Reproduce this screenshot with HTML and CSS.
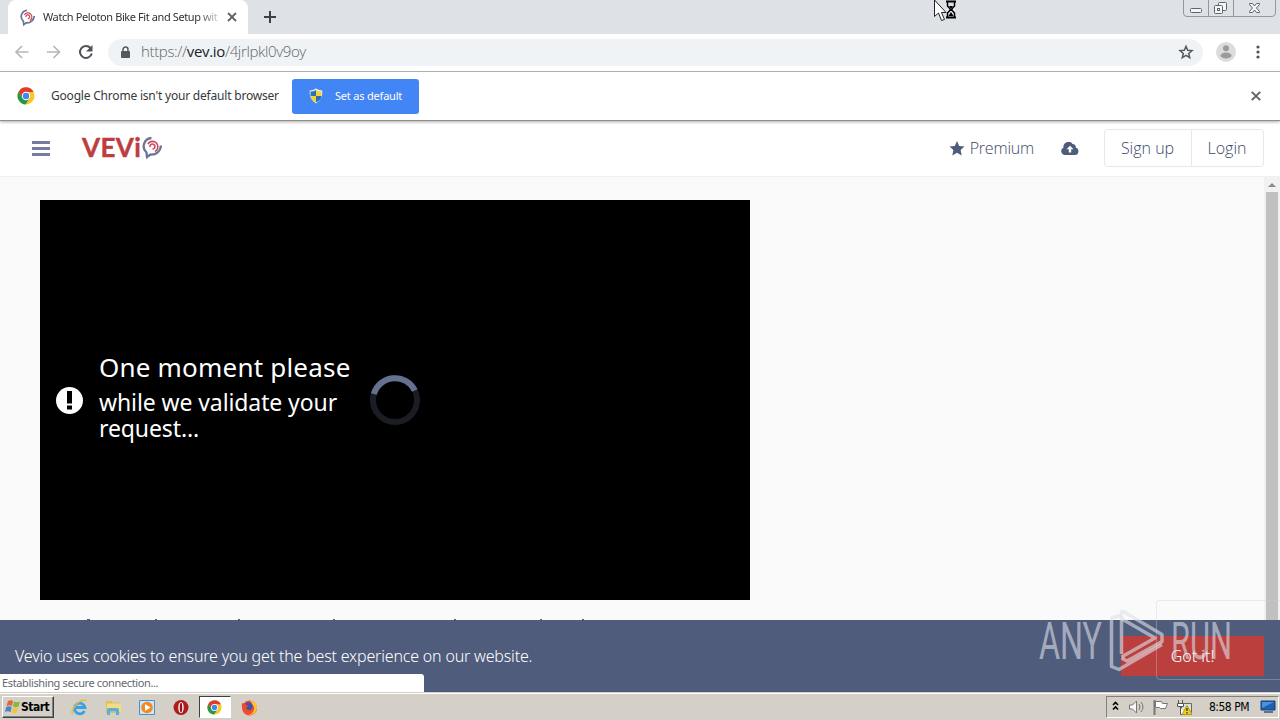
FILE: index.html
```html
<!DOCTYPE html>
<html lang="en">
<head>
  <meta charset="utf-8">
  <title>Vevio</title>
  <link rel="stylesheet" href="styles.css">
</head>
<body>

<svg width="0" height="0" class="defs">
  <symbol id="chrome" viewBox="0 0 18 18">
    <circle cx="9" cy="9" r="8.5" fill="#f8c726"/>
    <path d="M1.6 4.7A8.5 8.5 0 0 1 16.6 5H9L5.5 11Z" fill="#df3b2e"/>
    <path d="M1.6 4.8A8.5 8.5 0 0 0 8.6 17.5L12.5 11 9 13 5.5 11Z" fill="#24994d"/>
    <circle cx="9" cy="9" r="4.2" fill="#fff"/>
    <circle cx="9" cy="9" r="3.2" fill="#4285f4"/>
  </symbol>
  <symbol id="swirl" viewBox="0 0 20 22">
    <path d="M9.500 1.500A8.300 8.300 0 0 0 4.500 16L5 20.500 8.500 18A9.500 9.500 0 0 0 19 9" fill="none" stroke="#6b7596" stroke-width="2.300"/>
    <path d="M5.800 7.500A5.400 5.400 0 1 1 13 15M8 10.500A2.500 2.500 0 1 1 10.500 12.500" fill="none" stroke="#c8485a" stroke-width="1.600"/>
  </symbol>
</svg>

<div class="tab-strip">
  <div class="tab">
    <svg class="favicon" width="15" height="17"><use href="#swirl"/></svg>
    <span class="tab-title">Watch Peloton Bike Fit and Setup wit</span>
    <svg width="10" height="10" viewBox="0 0 10 10"><path d="M1 1l8 8M9 1L1 9" stroke="#5f6368" stroke-width="1.800"/></svg>
  </div>
  <svg class="new-tab" width="12" height="12" viewBox="0 0 12 12"><path d="M6 0v12M0 6h12" stroke="#3c4043" stroke-width="2"/></svg>
  <svg class="window-buttons" width="94" height="18" viewBox="0 0 94 18">
    <path d="M.5 0V13Q.5 16.500 4 16.500H89Q92.500 16.500 92.500 13V0M25.500 0v16M50.500 0v16" fill="none" stroke="#92989f"/>
    <g fill="#f4f6f8" stroke="#60656c">
      <rect x="7.500" y="8.500" width="11" height="4" rx="1"/>
      <rect x="35.500" y="2.500" width="8" height="8" rx="1"/>
      <rect x="31.500" y="5.500" width="8" height="8" rx="1"/>
      <rect x="34.500" y="8.500" width="2" height="2"/>
      <path d="M66.500 3.500h3l2 2.500 2-2.500h3v1L73.500 8l3 3.500v1h-3l-2-2.500-2 2.500h-3v-1l3-3.500-3-3.500z"/>
    </g>
  </svg>
  <svg class="cursor" width="24" height="22" viewBox="0 0 24 22">
    <path d="M.5 0V16.500L4.500 13l3 7.500 3-1-3-7H12z" fill="#fff" stroke="#222"/>
    <path d="M12 1.500h10M12 17.500h10" stroke="#000" stroke-width="2"/>
    <path d="M13.500 2v4l3 3.500-3 3.500v4M20.500 2v4l-3 3.500 3 3.500v4" fill="#fff" stroke="#000" stroke-width="1.500"/>
    <path d="M15 6h4l-2 3zM14.500 16l2.500-4 2.500 4z"/>
  </svg>
</div>

<div class="toolbar">
  <svg class="nav-icons" width="80" height="16" viewBox="0 0 80 16">
    <path d="M14.500 8H2M8 2L2 8l6 6M33 8h12.500M39.500 2l6 6-6 6" fill="none" stroke="#b5b7ba" stroke-width="1.700"/>
    <path d="M76.500 4A6 6 0 1 0 77.800 9.500" fill="none" stroke="#4f5357" stroke-width="2"/>
    <path d="M78.500 1v6.500H72z" fill="#4f5357"/>
  </svg>
  <div class="omnibox">
    <svg class="lock" width="10" height="13" viewBox="0 0 10 13"><rect x="0" y="5" width="9" height="7" rx="1" fill="#55595d"/><path d="M2 6V3.500a2.500 2.500 0 0 1 5 0V6" fill="none" stroke="#55595d" stroke-width="1.500"/></svg>
    <span class="url">https://<b>vev.io</b>/4jrlpkl0v9oy</span>
    <svg class="bookmark" width="16" height="16" viewBox="0 0 16 16"><path d="M8 2.300l1.700 3.900 4.300.4-3.300 2.800 1 4.200L8 11.400l-3.700 2.200 1-4.200L2 6.600l4.300-.4z" fill="none" stroke="#55595d" stroke-width="1.500"/></svg>
  </div>
  <svg class="avatar" width="20" height="20" viewBox="0 0 20 20"><circle cx="10" cy="10" r="10" fill="#dcdcdc"/><circle cx="10" cy="6.300" r="3" fill="#9b9b9b"/><ellipse cx="10" cy="13.500" rx="5.500" ry="3" fill="#9b9b9b"/></svg>
  <svg class="menu-dots" width="4" height="14" viewBox="0 0 4 14" fill="#4f5357"><circle cx="2" cy="2" r="1.600"/><circle cx="2" cy="7" r="1.600"/><circle cx="2" cy="12" r="1.600"/></svg>
</div>

<div class="infobar">
  <svg class="infobar-logo" width="18" height="18"><use href="#chrome"/></svg>
  <span class="infobar-text">Google Chrome isn't your default browser</span>
  <div class="default-button">
    <svg width="14" height="16" viewBox="0 0 14 16">
      <path d="M7 .5Q10 2.500 13.300 2.500 14 11 7 15.500 0 11 .7 2.500 4 2.500 7 .5z" fill="#e9eef0"/>
      <path d="M7 2v6H1.500L1.600 3.500Q5 3.500 7 2zM7 8h5.500Q12 12 7 14.500z" fill="#2e70b5"/>
      <path d="M7 2v6h5.500l-.1-4.500Q9 3.500 7 2zM7 8H1.500Q2 12 7 14.500z" fill="#f5d13a"/>
    </svg>
    <span>Set as default</span>
  </div>
  <svg class="infobar-close" width="10" height="10" viewBox="0 0 10 10"><path d="M.8.8l8.400 8.400M9.200.8L.8 9.200" stroke="#5f6368" stroke-width="1.900"/></svg>
</div>

<header class="site-header">
  <div class="burger"><i></i><i></i><i></i></div>
  <div class="logo"><span>VEVi</span><svg width="20" height="23"><use href="#swirl"/></svg></div>
  <div class="premium">
    <svg width="16" height="15" viewBox="0 0 16 15"><path d="M8 0l2.200 4.900 5.300.6-3.900 3.600 1.100 5.400L8 11.800l-4.700 2.700 1.100-5.400L.5 5.500l5.300-.6z" fill="#4f5b7c"/></svg>
    <span>Premium</span>
  </div>
  <svg class="upload" width="18" height="13" viewBox="0 0 18 13"><path d="M4 13a4 4 0 0 1-1.500-7.600A5 5 0 0 1 11.600 2a3.200 3.200 0 0 1 3.200 3.600A3.800 3.800 0 0 1 14 13z" fill="#4f5b7c"/><path d="M9 3.700l3.500 3.600h-2.300V10.500H7.800V7.300H5.500z" fill="#fff"/></svg>
  <div class="account">
    <span class="sign-up">Sign up</span>
    <span class="login">Login</span>
  </div>
</header>

<main class="content">
  <div class="page">
    <div class="player">
      <svg class="alert" width="28" height="28" viewBox="0 0 28 28"><circle cx="13.500" cy="14.500" r="13.500" fill="#fff"/><path d="M11 5h5v12.500h-5zM11 19.500h5v4h-5z" fill="#000"/></svg>
      <div class="message">
        <div class="message-title">One moment please</div>
        <div class="message-line">while we validate your</div>
        <div class="message-line">request...</div>
      </div>
      <svg class="spinner" width="50" height="50" viewBox="0 0 50 50" fill="none" stroke-width="6"><circle cx="25" cy="25" r="22" stroke="#1b1d25"/><path d="M3.900 19A22 22 0 0 1 44.800 15.500" stroke="#65728f"/></svg>
    </div>
    <svg class="title-tops" width="710" height="20" viewBox="0 0 710 20" fill="#4f5b7c"><path d="M47 19h3v1h-3zM115 19h2v1h-2zM198 19h2v1h-2zM293 19h2v1h-2zM414 19h2v1h-2zM500 19h2v1h-2zM542 19h2v1h-2z"/></svg>
  </div>
  <div class="scrollbar"><i class="arrow-up"></i><div class="thumb"></div></div>
</main>

<div class="cookie-bar">
  <span class="cookie-text">Vevio uses cookies to ensure you get the best experience on our website.</span>
  <div class="got-it">Got it!</div>
  <div class="status">Establishing secure connection...</div>
</div>

<svg class="watermark" width="260" height="92" viewBox="0 0 260 92">
  <path d="M260 .5H139Q136.500.5 136.500 3V76Q136.500 79.500 140 79.500H260" fill="none" stroke="#ccc" stroke-opacity=".35"/>
  <g class="watermark-text">
    <text x="19" y="59" textLength="63" lengthAdjust="spacingAndGlyphs">ANY</text>
    <text x="151" y="59" textLength="61" lengthAdjust="spacingAndGlyphs">RUN</text>
  </g>
  <g fill="none" stroke="#dfe1e8" stroke-opacity=".6" stroke-width="3.500" stroke-linejoin="round">
    <path d="M101 15.500L93 17.500Q91.500 18 91.500 20V66.500L99 69.500 142 44.500"/>
    <path d="M101.500 54V12Q103 11 105 12.500L142 34.500V41.500L107 61 101.500 58"/>
    <path d="M102 19L135 38 101.500 57"/>
  </g>
</svg>

<footer class="taskbar">
  <div class="start">
    <svg width="16" height="16" viewBox="0 0 16 16"><path d="M3 2q3-1.500 5 0L7 7Q5 5.500 1.500 7z" fill="#e8652e"/><path d="M9 2.500q3 1.500 6 0L13.500 7.500q-3 1.500-5.500 0z" fill="#83b843"/><path d="M1.200 8q3-1.500 5.500 0l-1.200 5q-3-1.500-5.500 0z" fill="#4385d0"/><path d="M7.700 8.500q3 1.500 5.700 0l-1.500 5q-3 1.500-5.500 0z" fill="#f6c338"/></svg>
    <span>Start</span>
  </div>
  <div class="launchers">
    <div class="launcher"><svg width="17" height="17" viewBox="0 0 17 17"><path d="M13.500 12A5.300 5.300 0 1 1 14 8.500H4" fill="none" stroke="#36a3e4" stroke-width="2.800"/><path d="M2 15Q-1 13 5 6T15.500 2" fill="none" stroke="#e8b938" stroke-width="1.300"/></svg></div>
    <div class="launcher"><svg width="17" height="17" viewBox="0 0 17 17"><path d="M1 2h6l1 1.500h7V14H1z" fill="#e0bf57"/><path d="M2 4.500h14V13H2z" fill="#f3dc85"/><path d="M2 16v-5q0-2 2-2h8q2 0 2 2v5h-3v-3.500H5V16z" fill="#5caed6"/></svg></div>
    <div class="launcher"><svg width="17" height="17" viewBox="0 0 17 17"><path d="M.5 1.500h15v14H.5z" fill="#cfe5f8" stroke="#4f91c6"/><circle cx="8" cy="8.500" r="5.800" fill="#f08a20"/><path d="M6 5l5.500 3.500L6 12z" fill="#fff"/></svg></div>
    <div class="launcher"><svg width="17" height="17" viewBox="0 0 17 17"><circle cx="8" cy="8.500" r="7.500" fill="#ae1c20"/><ellipse cx="8" cy="8.500" rx="2.700" ry="5.500" fill="#fff"/><ellipse cx="8" cy="8.500" rx="1.300" ry="4.700" fill="#951518"/></svg></div>
    <div class="launcher active"><svg width="15" height="15"><use href="#chrome"/></svg></div>
    <div class="launcher"><svg width="17" height="17" viewBox="0 0 17 17"><circle cx="8.500" cy="9" r="7.500" fill="#f0512c"/><path d="M9 1q7 2 7 8-1 7-8 7 6-3 5-8-2-3-4-7z" fill="#ffc331"/><circle cx="7.500" cy="7.500" r="4.200" fill="#4650a5"/><path d="M1 4l3 1 3 2-2 2q2 3 6 2-3 4-7 2Q0 10 1 4z" fill="#ed4a2c"/></svg></div>
  </div>
  <div class="tray">
    <svg class="tray-icons" width="80" height="18" viewBox="0 0 80 18">
      <path d="M1 7l2.500-2.500L6 7M1 11.500L3.500 9 6 11.500" fill="none" stroke="#000" stroke-width="1.600"/>
      <path d="M17.500 7h3l4-4v12l-4-4h-3z" fill="#f8f8f8" stroke="#777"/>
      <path d="M27 6q2 3 0 6M29 4q4 5 0 10" fill="none" stroke="#777"/>
      <path d="M42.500 2v15" stroke="#777" stroke-width="2"/>
      <path d="M43.500 3.500h6l1 2h5l-2 5h-5l-1-1h-4z" fill="#fff" stroke="#777"/>
      <path d="M69.500 5.500h10v9h-10z" fill="#ddd" stroke="#666"/>
      <path d="M66.500 2v3M70.500 2v3M65.500 5.500h6v3h-6zM68.500 9v7.500h5" fill="#fff" stroke="#555"/>
      <path d="M75 7.500l5 9H70z" fill="#f2d31b" stroke="#b69b0c"/><path d="M75 10v3M75 14v1.500" stroke="#000"/>
    </svg>
    <span class="clock">8:58 PM</span>
    <svg width="16" height="14" viewBox="0 0 16 14"><path d="M1 1h14v9H1z" fill="#1c60b4" stroke="#164174"/><path d="M2 2h12L2 8z" fill="#4c91db"/><path d="M4 12h9" stroke="#5d7690" stroke-width="2"/></svg>
  </div>
</footer>

</body>
</html>
```

FILE: styles.css
```css
* {
  box-sizing: border-box;
}

body {
  margin: 0;
  width: 1280px;
  height: 720px;
  overflow: hidden;
  background: #fff;
  font-family: "Noto Sans", sans-serif;
  display: flex;
  flex-direction: column;
  position: relative;
}

span, .got-it, .status, .message {
  white-space: nowrap;
}

svg {
  display: block;
  flex: none;
}

.defs {
  position: absolute;
}

/* browser window */
.tab-strip {
  height: 34px;
  flex: none;
  background: #dee1e6;
  display: flex;
  align-items: center;
  position: relative;
}

.tab {
  width: 240px;
  height: 34px;
  margin-left: 8px;
  padding-left: 12px;
  background: #fff;
  border-radius: 8px 8px 0 0;
  display: flex;
  align-items: center;
}

.tab-title {
  width: 175px;
  margin: 0 9px 2px 8px;
  font-size: 11px;
  letter-spacing: -0.4px;
  color: #303236;
  -webkit-mask-image: linear-gradient(90deg, #000 155px, transparent 180px);
}

.new-tab {
  margin-left: 16px;
}

.window-buttons {
  margin-left: auto;
  margin-right: 3px;
  align-self: flex-start;
}

.cursor {
  position: absolute;
  left: 934px;
  top: 0;
}

.toolbar {
  height: 38px;
  flex: none;
  padding: 0 20px 1px 14px;
  border-bottom: 1px solid #aeb1b1;
  display: flex;
  align-items: center;
}

.omnibox {
  width: 1095px;
  height: 27px;
  margin-left: 14px;
  padding: 0 9px 0 13px;
  border-radius: 14px;
  background: #f0f3f6;
  display: flex;
  align-items: center;
}

.url {
  margin-left: 10px;
  padding-bottom: 2px;
  font-family: "Open Sans", sans-serif;
  font-weight: 300;
  font-size: 15px;
  letter-spacing: -0.35px;
  color: #5f6368;
}

.url b {
  color: #202124;
  font-weight: 400;
}

.bookmark {
  margin-left: auto;
}

.avatar {
  margin-left: 13px;
}

.menu-dots {
  margin-left: 20px;
}

.infobar {
  height: 49px;
  flex: none;
  margin-bottom: 1px;
  border-bottom: 1px solid #8e8e8e;
  box-shadow: 0 1px 3px #aaa;
  padding: 0 19px 0 17px;
  display: flex;
  align-items: center;
  position: relative;
}

.infobar-text {
  width: 241px;
  margin-left: 16px;
  padding-bottom: 1px;
  font-size: 12px;
  letter-spacing: -0.2px;
  color: #36393d;
}

.default-button {
  width: 127px;
  height: 35px;
  padding-left: 17px;
  border-radius: 3px;
  background: #4285f4;
  color: #fff;
  font-size: 11px;
  letter-spacing: -0.2px;
  display: flex;
  align-items: center;
  gap: 12px;
}

.default-button span {
  padding-bottom: 2px;
}

.infobar-close {
  margin-left: auto;
}

/* site header */
.site-header {
  height: 55px;
  flex: none;
  padding: 0 16px 2px 32px;
  border-bottom: 1px solid #f0f0f0;
  display: flex;
  align-items: center;
  font-family: "Open Sans", sans-serif;
  font-weight: 300;
  font-size: 16px;
  color: #3c4867;
}

.burger {
  width: 18px;
  display: grid;
  gap: 3px;
}

.burger i {
  height: 3px;
  background: #747ca0;
}

.logo {
  width: 81px;
  margin-left: 32px;
  padding-bottom: 2px;
  display: flex;
  align-items: center;
}

.logo span {
  width: 60px;
  font-family: Lato, sans-serif;
  font-size: 26px;
  font-weight: 700;
  line-height: 30px;
  letter-spacing: 0.4px;
  -webkit-text-stroke: 0.4px #bd3d41;
  color: #bd3d41;
}

.premium {
  margin-left: auto;
  display: flex;
  align-items: center;
  gap: 5px;
  letter-spacing: -0.2px;
}

.upload {
  margin: 0 25px 0 27px;
}

.account {
  width: 160px;
  height: 38px;
  border: 1px solid #e7e8ea;
  border-radius: 4px;
  display: flex;
}

.account span {
  padding-right: 1px;
  line-height: 36px;
  text-align: center;
}

.sign-up {
  width: 87px;
  border-right: 1px solid #e7e8ea;
}

.login {
  flex: 1;
}

/* page */
.content {
  height: 443px;
  flex: none;
  background: #fafafa;
  display: flex;
  justify-content: space-between;
}

.page {
  padding: 23px 0 0 40px;
}

.player {
  width: 710px;
  height: 400px;
  padding-left: 16px;
  background: #000;
  display: flex;
  align-items: center;
}

.message {
  width: 271px;
  margin-left: 15px;
  padding-bottom: 10px;
  color: #fff;
}

.message-title {
  margin-bottom: 4px;
  font-size: 26px;
  line-height: 36px;
  letter-spacing: 0.2px;
}

.message-line {
  font-size: 23px;
  line-height: 26px;
  letter-spacing: -0.1px;
}

.scrollbar {
  width: 16px;
  padding: 6px 2px 0;
  background: #f1f1f1;
  display: flex;
  flex-direction: column;
  align-items: center;
}

.arrow-up {
  border: 4px solid transparent;
  border-top: 0;
  border-bottom: 4px solid #8b8b8b;
}

.thumb {
  width: 12px;
  flex: 1;
  margin-top: 5px;
  background: #c1c1c1;
}

.cookie-bar {
  height: 72px;
  flex: none;
  padding: 0 16px 0 15px;
  background: #505c7c;
  color: #fff;
  font-size: 16px;
  font-weight: 300;
  display: flex;
  align-items: center;
  justify-content: space-between;
  position: relative;
}

.cookie-text {
  letter-spacing: -0.18px;
}

.got-it {
  width: 143px;
  height: 40px;
  line-height: 40px;
  text-align: center;
  background: #ba3f3d;
}

.status {
  position: absolute;
  left: 0;
  bottom: 0;
  width: 424px;
  height: 18px;
  padding-left: 2px;
  line-height: 18px;
  border-radius: 0 3px 0 0;
  background: #fff;
  color: #65686c;
  font-size: 11px;
  font-weight: 400;
  letter-spacing: -0.37px;
}

.watermark {
  position: absolute;
  left: 1020px;
  top: 600px;
}

.watermark-text {
  font-family: Roboto, sans-serif;
  font-size: 52px;
  font-weight: 400;
  fill: #dfe1e8;
  fill-opacity: .6;
}

/* taskbar */
.taskbar {
  height: 28px;
  flex: none;
  padding: 1px 1px 0 2px;
  border-top: 1px solid #d4d0c8;
  box-shadow: inset 0 1px #fff;
  background: #d4d0c8;
  font-family: "DejaVu Sans Condensed", "DejaVu Sans", sans-serif;
  font-stretch: condensed;
  display: flex;
  align-items: center;
}

.start {
  width: 52px;
  height: 22px;
  padding-left: 2px;
  border: 1px solid #fff;
  border-right-color: #404040;
  border-bottom-color: #404040;
  box-shadow: inset -1px -1px #808080;
  display: flex;
  align-items: center;
  font-size: 12px;
  font-weight: 700;
  letter-spacing: -0.5px;
}

.launchers {
  margin-left: 9px;
  display: flex;
  gap: 2px;
}

.launcher {
  width: 32px;
  height: 22px;
  display: flex;
  align-items: center;
  justify-content: center;
}

.launcher.active {
  padding-right: 1px;
  background: #fff;
  border: 1px solid #fff;
  border-top-color: #404040;
  border-left-color: #404040;
}

.tray {
  width: 173px;
  height: 22px;
  margin-left: auto;
  padding: 0 2px 0 5px;
  border: 1px solid #fff;
  border-top-color: #808080;
  border-left-color: #808080;
  display: flex;
  align-items: center;
  justify-content: space-between;
}

.clock {
  margin-left: 6px;
  font-size: 12px;
  letter-spacing: -0.5px;
}
```
